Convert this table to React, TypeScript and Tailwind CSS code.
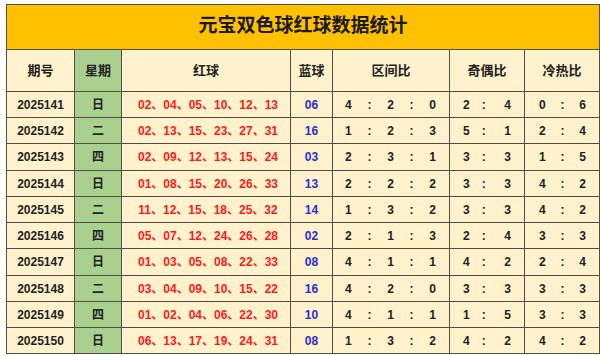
const rows: [string, string, string, string, string, string, string][] = [
  ['2025141', '日', '02、04、05、10、12、13', '06', '4:2:0', '2:4', '0:6'],
  ['2025142', '二', '02、13、15、23、27、31', '16', '1:2:3', '5:1', '2:4'],
  ['2025143', '四', '02、09、12、13、15、24', '03', '2:3:1', '3:3', '1:5'],
  ['2025144', '日', '01、08、15、20、26、33', '13', '2:2:2', '3:3', '4:2'],
  ['2025145', '二', '11、12、15、18、25、32', '14', '1:3:2', '3:3', '4:2'],
  ['2025146', '四', '05、07、12、24、26、28', '02', '2:1:3', '2:4', '3:3'],
  ['2025147', '日', '01、03、05、08、22、33', '08', '4:1:1', '4:2', '2:4'],
  ['2025148', '二', '03、04、09、10、15、22', '16', '4:2:0', '3:3', '3:3'],
  ['2025149', '四', '01、02、04、06、22、30', '10', '4:1:1', '1:5', '3:3'],
  ['2025150', '日', '06、13、17、19、24、31', '08', '1:3:2', '4:2', '4:2'],
];

const FONT = { fontFamily: '"Liberation Sans", "Noto Sans CJK SC", sans-serif' };
const cell = 'bg-[#fff2cc] flex items-center justify-center';

function Zone({ v }: { v: string }) {
  const [a, b, c] = v.split(':');
  return (
    <div className={`${cell} !justify-between pl-[12px] pr-[13px]`}>
      <span>{a}</span>
      <span>:</span>
      <span>{b}</span>
      <span>:</span>
      <span>{c}</span>
    </div>
  );
}

function Pair({ v, tight }: { v: string; tight?: boolean }) {
  const [a, b] = v.split(':');
  if (tight) {
    return (
      <div className={`${cell} !justify-start pl-[13px] pr-[13px]`}>
        <span>{a}</span>
        <span className="ml-[12px]">:</span>
        <span className="ml-auto">{b}</span>
      </div>
    );
  }
  return (
    <div className={`${cell} !justify-between pl-[14px] pr-[13px]`}>
      <span>{a}</span>
      <span>:</span>
      <span>{b}</span>
    </div>
  );
}

export default function App() {
  return (
    <div className="w-[600px] h-[356px] bg-white pt-[4px] pl-[6px]" style={FONT}>
      <div className="w-[594px] grid gap-px bg-[#4f4f44] p-px grid-cols-[67px_46px_168px_41px_116px_74px_74px] grid-rows-[44px_41px_25px_25px_26px_25px_25px_25px_26px_25px_25px_25px] text-[12px] font-bold text-[#222]">
        <div className="col-span-7 bg-[#ffc000] flex items-center justify-center text-[19px] font-bold text-[#1a1a1a] pb-[1px]">
          元宝双色球红球数据统计
        </div>
        <div className={`${cell} text-[13px]`}>期号</div>
        <div className={`${cell} !bg-[#a9d08e] text-[13px]`}>星期</div>
        <div className={`${cell} text-[13px]`}>红球</div>
        <div className={`${cell} text-[13px]`}>蓝球</div>
        <div className={`${cell} text-[13px]`}>区间比</div>
        <div className={`${cell} text-[13px]`}>奇偶比</div>
        <div className={`${cell} text-[13px]`}>冷热比</div>
        {rows.map((r) => (
          <div key={r[0]} className="contents">
            <div className={cell}>{r[0]}</div>
            <div className={`${cell} !bg-[#a9d08e]`}>{r[1]}</div>
            <div className={`${cell} text-[#ff1a1a] pl-[4px]`}>{r[2]}</div>
            <div className={`${cell} text-[#2b2bd6]`}>{r[3]}</div>
            <Zone v={r[4]} />
            <Pair v={r[5]} tight />
            <Pair v={r[6]} />
          </div>
        ))}
      </div>
    </div>
  );
}
